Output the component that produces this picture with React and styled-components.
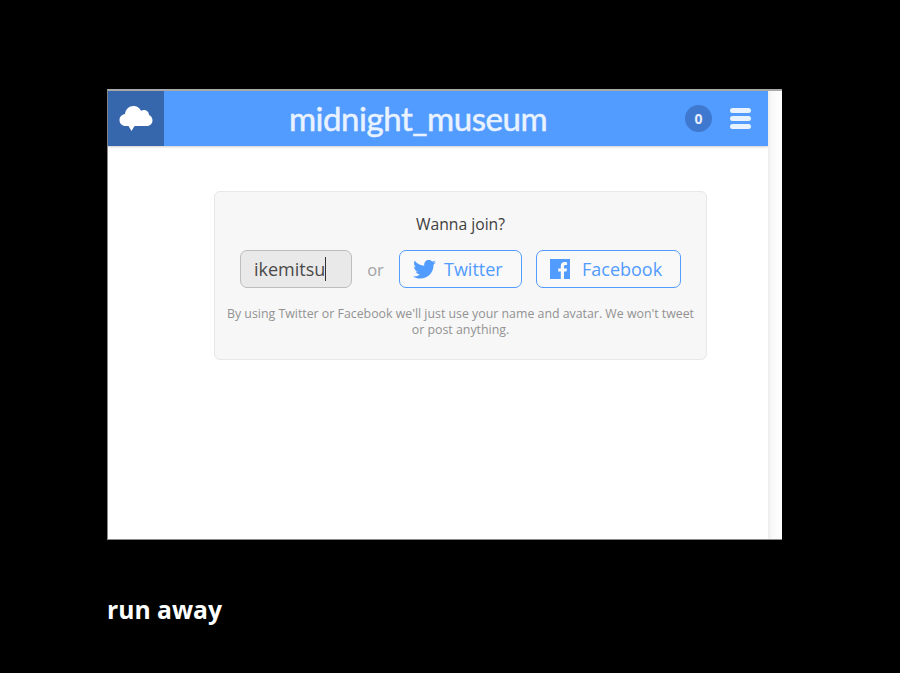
import React from 'react';
import styled, { createGlobalStyle } from 'styled-components';

const GlobalStyle = createGlobalStyle`
  html, body {
    margin: 0;
    background: #000;
    font-family: "Open Sans", "Liberation Sans", sans-serif;
  }
`;

const Page = styled.div`
  width: 900px;
  height: 673px;
  box-sizing: border-box;
  padding: 89px 0 0 107px;
  overflow: hidden;
  background: #000;
`;

const Frame = styled.div`
  width: 675px;
  height: 451px;
  box-sizing: border-box;
  display: flex;
  background: #fff;
  border-top: 2px solid #a9a9a9;
  border-bottom: 1px solid #8a8a8a;
  border-left: 1px solid #8a8a8a;
`;

const Main = styled.div`
  width: 660px;
  display: flex;
  flex-direction: column;
`;

const Scrollbar = styled.div`
  width: 14px;
  background: linear-gradient(90deg, #ececec 0, #f8f8f8 3px, #fff 100%);
`;

const Header = styled.header`
  height: 55px;
  display: flex;
  align-items: center;
  background: #529bff;
  box-shadow: 0 1px 2px rgba(0, 0, 0, 0.2);
`;

const LogoBox = styled.div`
  width: 56px;
  height: 100%;
  flex: none;
  display: flex;
  align-items: center;
  justify-content: center;
  background: #3667ad;
`;

const Title = styled.h1`
  margin: 0;
  width: 508px;
  flex: none;
  text-align: center;
  color: #e9f2ff;
  font: 400 33px/55px Lato, "Open Sans", sans-serif;
  letter-spacing: -0.45px;
  -webkit-text-stroke: 0.5px #e9f2ff;
`;

const Badge = styled.div`
  width: 27px;
  height: 27px;
  flex: none;
  margin-left: 13px;
  border-radius: 50%;
  display: flex;
  align-items: center;
  justify-content: center;
  background: #3f78cf;
  color: #e4eeff;
  font-size: 14px;
  font-weight: 700;
`;

const Burger = styled.div`
  width: 21px;
  flex: none;
  margin-left: 18px;
  display: flex;
  flex-direction: column;
  gap: 3px;
`;

const BurgerLine = styled.span`
  height: 5px;
  border-radius: 3px;
  background: #e9f2ff;
`;

const Content = styled.main`
  flex: 1;
  display: flex;
  flex-direction: column;
  align-items: flex-start;
  padding: 45px 0 0 106px;
`;

const Card = styled.section`
  width: 493px;
  height: 169px;
  box-sizing: border-box;
  padding-top: 22px;
  display: flex;
  flex-direction: column;
  align-items: center;
  background: #f7f7f7;
  border: 1px solid #e8e8e8;
  border-radius: 6px;
`;

const Heading = styled.h2`
  margin: 0;
  color: #404040;
  font-size: 15.7px;
  font-weight: 400;
  line-height: 20px;
`;

const Actions = styled.div`
  margin-top: 16px;
  display: flex;
  align-items: center;
  color: #999;
`;

const NameField = styled.div`
  width: 112px;
  height: 38px;
  box-sizing: border-box;
  padding-left: 13px;
  display: flex;
  align-items: center;
  background: #e9e9e9;
  border: 1px solid #bdbdbd;
  border-radius: 7px;
  color: #4a4a4a;
  font-size: 18px;
`;

const Caret = styled.span`
  width: 1px;
  height: 24px;
  background: #333;
`;

const Or = styled.span`
  width: 47px;
  text-align: center;
  font-size: 16.5px;
  color: #a3a3a3;
`;

const SocialButton = styled.button`
  width: ${(p) => p.$width}px;
  height: 38px;
  margin-right: ${(p) => p.$gap || 0}px;
  padding: 0 0 0 ${(p) => p.$pad}px;
  box-sizing: border-box;
  display: flex;
  align-items: center;
  gap: ${(p) => p.$iconGap}px;
  background: #f9f9f9;
  border: 1px solid #529bff;
  border-radius: 7px;
  color: #529bff;
  font: 400 18px "Open Sans", sans-serif;
`;

const Note = styled.p`
  margin: 18px 0 0;
  width: 472px;
  text-align: center;
  color: #929292;
  font-size: 12.35px;
  line-height: 16px;
`;

const Footer = styled.div`
  margin-top: 55px;
  color: #fff;
  font-size: 24.7px;
  font-weight: 700;
  line-height: 30px;
`;

const CloudIcon = () => (
  <svg width="34" height="27" viewBox="0 0 34 27" aria-hidden="true">
    <path
      fill="#fff"
      d="M6.500 21C3 21 .5 18.500 .5 15C.5 11.800 3 9.500 6 9C6.500 4.500 10 1 14.500 1C18 1 20.500 3 22 5.800C23 5.200 24 5 25 5C28 5 30 7.500 30 10C32 10.800 33.500 13 33.500 15.500C33.500 18.500 31 21 28 21H15.500L12.500 26L9.500 21Z"
    />
  </svg>
);

const TwitterIcon = () => (
  <svg width="23" height="19" viewBox="0 0 24 20" aria-hidden="true">
    <path
      fill="#529bff"
      d="M24 2.400c-.9.400-1.800.7-2.800.8 1-.6 1.800-1.600 2.200-2.700-1 .6-2 1-3.100 1.200C19.300.6 18 0 16.600 0c-2.700 0-4.900 2.200-4.900 4.900 0 .4 0 .8.100 1.100C7.700 5.800 4.100 3.900 1.700.9 1.200 1.600 1 2.500 1 3.400c0 1.700.9 3.200 2.200 4.100-.8 0-1.600-.2-2.200-.6v.1c0 2.400 1.700 4.400 3.900 4.800-.4.100-.8.200-1.300.2-.3 0-.6 0-.9-.1.600 2 2.400 3.400 4.600 3.400-1.700 1.300-3.800 2.100-6.100 2.100-.4 0-.8 0-1.200-.1C2.200 18.700 4.800 19.500 7.500 19.500c9.100 0 14-7.500 14-14v-.6c1-.7 1.800-1.600 2.500-2.500z"
    />
  </svg>
);

const FacebookIcon = () => (
  <svg width="20" height="20" viewBox="0 0 20 20" aria-hidden="true">
    <path
      fill="#529bff"
      d="M0 0H20V20H14V12.500H16.500L17 9.500H14V7.500C14 6.600 14.400 6 15.500 6H17V3.300C16.500 3.200 15.600 3.100 14.600 3.100C12.300 3.100 10.800 4.500 10.800 7V9.500H8.200V12.500H10.800V20H0Z"
    />
  </svg>
);

const App = () => {
  return (
    <Page>
      <GlobalStyle />
      <Frame>
        <Main>
          <Header>
            <LogoBox>
              <CloudIcon />
            </LogoBox>
            <Title>midnight_museum</Title>
            <Badge>0</Badge>
            <Burger>
              <BurgerLine />
              <BurgerLine />
              <BurgerLine />
            </Burger>
          </Header>
          <Content>
            <Card>
              <Heading>Wanna join?</Heading>
              <Actions>
                <NameField>
                  ikemitsu
                  <Caret />
                </NameField>
                <Or>or</Or>
                <SocialButton $width={123} $gap={14} $pad={13} $iconGap={8}>
                  <TwitterIcon />
                  Twitter
                </SocialButton>
                <SocialButton $width={145} $pad={13} $iconGap={12}>
                  <FacebookIcon />
                  Facebook
                </SocialButton>
              </Actions>
              <Note>
                By using Twitter or Facebook we'll just use your name and avatar. We won't tweet or post anything.
              </Note>
            </Card>
          </Content>
        </Main>
        <Scrollbar />
      </Frame>
      <Footer>run away</Footer>
    </Page>
  );
};

export default App;
